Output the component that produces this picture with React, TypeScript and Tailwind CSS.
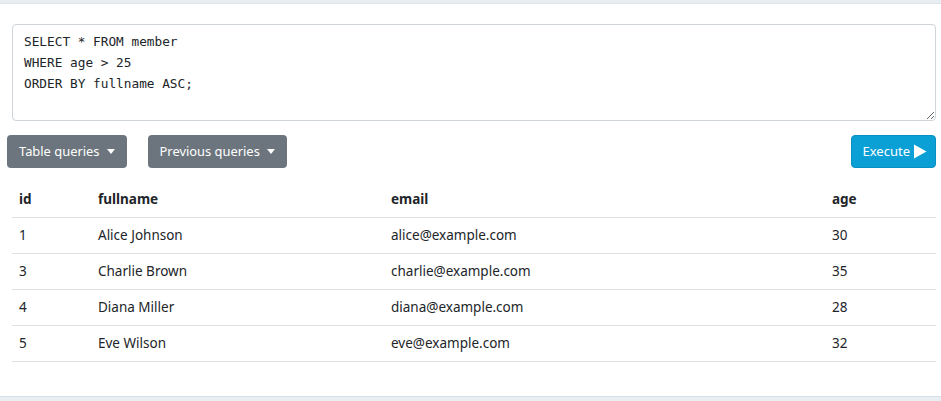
import { useState } from 'react';

const rows = [
  { id: 1, fullname: 'Alice Johnson', email: 'alice@example.com', age: 30 },
  { id: 3, fullname: 'Charlie Brown', email: 'charlie@example.com', age: 35 },
  { id: 4, fullname: 'Diana Miller', email: 'diana@example.com', age: 28 },
  { id: 5, fullname: 'Eve Wilson', email: 'eve@example.com', age: 32 },
];

function Caret() {
  return <span className="ml-[7px] inline-block w-0 h-0 border-l-[4px] border-r-[4px] border-t-[5px] border-l-transparent border-r-transparent border-t-white align-middle" />;
}

export default function App() {
  const [sql, setSql] = useState('SELECT * FROM member\nWHERE age > 25\nORDER BY fullname ASC;');

  return (
    <div className="h-[401px] bg-[#e8eef2] pt-[3px] overflow-hidden" style={{ fontFamily: '"Noto Sans", "Open Sans", sans-serif' }}>
      <div className="bg-white border-t border-[#dde4ea] border-b border-b-[#d3e1ec] pt-[20px] pb-[34px] pl-[7px] pr-[5px]">
        <textarea
          value={sql}
          onChange={(e) => setSql(e.target.value)}
          spellCheck={false}
          className="ml-[5px] block w-[924px] h-[97px] border border-[#ced4da] rounded-[4px] px-[11px] py-[6px] text-[12.75px] leading-[21px] text-[#212529] outline-none"
          style={{ fontFamily: '"DejaVu Sans Mono", "Liberation Mono", monospace' }}
        />

        <div className="flex items-center mt-[14px]">
          <button className="h-[33px] px-[12px] rounded-[4px] bg-[#6c757d] text-white text-[12.9px] flex items-center">
            Table queries <Caret />
          </button>
          <button className="ml-[21px] h-[33px] px-[12px] rounded-[4px] bg-[#6c757d] text-white text-[12.9px] flex items-center">
            Previous queries <Caret />
          </button>
          <button className="ml-auto h-[33px] pl-[11px] pr-[8px] rounded-[4px] bg-[#0aa0d6] border border-[#0890c2] text-white text-[13px] flex items-center gap-[3px]">
            Execute
            <svg width="14" height="15" viewBox="0 0 14 15"><path d="M1 0.5 L13.5 7.5 L1 14.5 Z" fill="white" /></svg>
          </button>
        </div>

        <table className="ml-[5px] mt-[13px] w-[924px] text-[13.5px] text-[#212529] border-collapse">
          <thead>
            <tr className="border-b border-[#dee2e6] h-[36px]">
              <th className="w-[79px] text-left font-bold pl-[7px]">id</th>
              <th className="w-[293px] text-left font-bold pl-[7px]">fullname</th>
              <th className="w-[441px] text-left font-bold pl-[7px]">email</th>
              <th className="text-left font-bold pl-[7px]">age</th>
            </tr>
          </thead>
          <tbody>
            {rows.map((r) => (
              <tr key={r.id} className="border-b border-[#dee2e6] h-[36px]">
                <td className="pl-[7px]">{r.id}</td>
                <td className="pl-[7px]">{r.fullname}</td>
                <td className="pl-[7px]">{r.email}</td>
                <td className="pl-[7px]">{r.age}</td>
              </tr>
            ))}
          </tbody>
        </table>
      </div>
    </div>
  );
}
